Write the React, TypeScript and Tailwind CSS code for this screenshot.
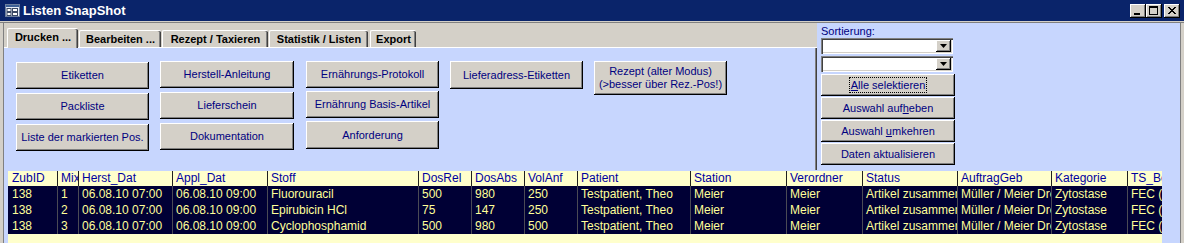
const face = "bg-[#d4d0c8]";
const raised =
  "shadow-[inset_-1px_-1px_0_#000,inset_1px_1px_0_#fff,inset_-2px_-2px_0_#808080]";

const tabs = [
  { label: "Drucken ...", w: "w-[71px]", active: true },
  { label: "Bearbeiten ...", w: "w-[82px]", active: false },
  { label: "Rezept / Taxieren", w: "w-[106px]", active: false },
  { label: "Statistik / Listen", w: "w-[99px]", active: false },
  { label: "Export", w: "w-[46px] ml-[1px]", active: false },
];

const cols = [
  { h: "ZubID", w: "w-[49px]" },
  { h: "Mix", w: "w-[21px]" },
  { h: "Herst_Dat", w: "w-[94px]" },
  { h: "Appl_Dat", w: "w-[95px]" },
  { h: "Stoff", w: "w-[151px]" },
  { h: "DosRel", w: "w-[53px]" },
  { h: "DosAbs", w: "w-[53px]" },
  { h: "VolAnf", w: "w-[53px]" },
  { h: "Patient", w: "w-[113px]" },
  { h: "Station", w: "w-[96px]" },
  { h: "Verordner", w: "w-[76px]" },
  { h: "Status", w: "w-[95px]" },
  { h: "AuftragGeb", w: "w-[94px]" },
  { h: "Kategorie", w: "w-[76px]" },
  { h: "TS_Bearbeitung", w: "w-[60px]" },
];

const rows = [
  ["138", "1", "06.08.10 07:00", "06.08.10 09:00", "Fluorouracil", "500", "980", "250", "Testpatient, Theo", "Meier", "Meier", "Artikel zusammengestellt", "Müller / Meier Dres.", "Zytostase", "FEC (Zyklus 1)"],
  ["138", "2", "06.08.10 07:00", "06.08.10 09:00", "Epirubicin HCl", "75", "147", "250", "Testpatient, Theo", "Meier", "Meier", "Artikel zusammengestellt", "Müller / Meier Dres.", "Zytostase", "FEC (Zyklus 1)"],
  ["138", "3", "06.08.10 07:00", "06.08.10 09:00", "Cyclophosphamid", "500", "980", "500", "Testpatient, Theo", "Meier", "Meier", "Artikel zusammengestellt", "Müller / Meier Dres.", "Zytostase", "FEC (Zyklus 1)"],
];

function FormIcon() {
  return (
    <svg width="15" height="13" viewBox="0 0 15 13" className="shrink-0">
      <rect x="0.5" y="0.5" width="14" height="12" fill="#e8eef8" stroke="#6d7f9f" />
      <rect x="1" y="1" width="13" height="2" fill="#3c5f96" />
      <rect x="2" y="4.5" width="4" height="3" fill="#fff" stroke="#3c4a66" strokeWidth="1" />
      <rect x="7.5" y="4.5" width="5" height="3" fill="#fff" stroke="#3c4a66" strokeWidth="1" />
      <rect x="2" y="8.5" width="4" height="3" fill="#fff" stroke="#3c4a66" strokeWidth="1" />
      <rect x="7.5" y="8.5" width="5" height="3" fill="#fff" stroke="#3c4a66" strokeWidth="1" />
    </svg>
  );
}

function CaptionButton({ kind }: { kind: "min" | "max" | "close" }) {
  return (
    <div className={`w-[16px] h-[14px] ${face} ${raised} flex items-center justify-center`}>
      <svg width="16" height="14" viewBox="0 0 16 14">
        {kind === "min" && <rect x="4" y="9" width="6" height="2" fill="#000" />}
        {kind === "max" && (
          <>
            <rect x="3.5" y="2.5" width="8" height="8" fill="none" stroke="#000" />
            <rect x="3" y="2" width="9" height="2" fill="#000" />
          </>
        )}
        {kind === "close" && (
          <path d="M4 3 L11 10 M5 3 L12 10 M11 3 L4 10 M12 3 L5 10" stroke="#000" strokeWidth="1" />
        )}
      </svg>
    </div>
  );
}

function Btn({ children, className = "" }: { children: React.ReactNode; className?: string }) {
  return (
    <div
      className={`${face} ${raised} flex items-center justify-center text-center text-[11px] leading-[13px] text-[#000080] ${className}`}
    >
      {children}
    </div>
  );
}

function Combo() {
  return (
    <div className="w-[132px] h-[16px] bg-white flex justify-end items-start p-[2px] shadow-[inset_1px_1px_0_#808080,inset_2px_2px_0_#404040,inset_-1px_-1px_0_#fff,inset_-2px_-2px_0_#d4d0c8]">
      <div className={`w-[15px] h-[12px] ${face} ${raised} flex items-center justify-center`}>
        <svg width="7" height="4" viewBox="0 0 7 4">
          <path d="M0 0 H7 L3.5 4 Z" fill="#000" />
        </svg>
      </div>
    </div>
  );
}

export default function App() {
  return (
    <div className="w-[1184px] h-[243px] overflow-hidden bg-[#d4d0c8] font-['Liberation_Sans',Arial,sans-serif] flex flex-col">
      {/* title bar */}
      <div className="h-[21px] shrink-0 bg-[#0a246a] flex items-center pl-[5px] pr-[4px]">
        <FormIcon />
        <span className="ml-[3px] text-white font-bold text-[13px] leading-[15px]">Listen SnapShot</span>
        <div className="ml-auto flex items-center">
          <CaptionButton kind="min" />
          <CaptionButton kind="max" />
          <div className="w-[2px]" />
          <CaptionButton kind="close" />
        </div>
      </div>
      <div className="h-[2px] shrink-0 bg-[#d4d0c8] border-b border-[#808080]" />

      <div className="flex flex-1 min-h-0">
        <div className="w-[4px] shrink-0 bg-[#d4d0c8] border-r border-[#808080]" />

        <div className="w-[1176px] bg-[#c7d6fe] flex flex-col">
          <div className="h-[147px] flex shrink-0">
            {/* tab control */}
            <div className="w-[813px] flex flex-col">
              <div className={`h-[24px] ${face} flex items-end pl-[3px] gap-[1px]`}>
                {tabs.map((t) => (
                  <div
                    key={t.label}
                    className={`${t.w} ${t.active ? "h-[20px] relative z-10 -mb-px pb-[2px]" : "h-[17px]"} ${face} rounded-t-[2px] border-l border-t border-white shadow-[inset_-1px_0_0_#404040,inset_-2px_0_0_#808080] flex items-center justify-center text-[11px] font-bold text-black whitespace-nowrap`}
                  >
                    {t.label}
                  </div>
                ))}
              </div>
              <div className="flex-1 border-t border-white shadow-[inset_-1px_0_0_#404040,inset_-2px_0_0_#808080] pt-[13px] pl-[12px] flex items-start">
                <div className="w-[133px] mt-[1px] flex flex-col gap-[4px]">
                  <Btn className="h-[27px]">Etiketten</Btn>
                  <Btn className="h-[27px]">Packliste</Btn>
                  <Btn className="h-[27px]">Liste der markierten Pos.</Btn>
                </div>
                <div className="w-[134px] ml-[11px] flex flex-col gap-[4px]">
                  <Btn className="h-[27px]">Herstell-Anleitung</Btn>
                  <Btn className="h-[27px]">Lieferschein</Btn>
                  <Btn className="h-[27px]">Dokumentation</Btn>
                </div>
                <div className="w-[133px] ml-[12px] flex flex-col gap-[3px]">
                  <Btn className="h-[27px]">Ernährungs-Protokoll</Btn>
                  <Btn className="h-[27px]">Ernährung Basis-Artikel</Btn>
                  <Btn className="h-[28px]">Anforderung</Btn>
                </div>
                <Btn className="w-[133px] h-[28px] ml-[11px]">Lieferadress-Etiketten</Btn>
                <Btn className="w-[133px] h-[34px] ml-[11px]">
                  Rezept (alter Modus)
                  <br />
                  (&gt;besser über Rez.-Pos!)
                </Btn>
              </div>
            </div>

            {/* sorting / selection */}
            <div className="flex flex-col pl-[4px] pt-[2px]">
              <div className="h-[13px] text-[11px] leading-[13px] text-[#000080]">Sortierung:</div>
              <Combo />
              <div className="h-[2px]" />
              <Combo />
              <div className="mt-[2px] w-[134px] flex flex-col gap-[1px]">
                <Btn className="h-[22px]">
                  <span className="border border-dotted border-black px-[1px] leading-[14px]">
                    <u>A</u>lle selektieren
                  </span>
                </Btn>
                <Btn className="h-[22px]">
                  <span>
                    Auswahl auf<u>h</u>eben
                  </span>
                </Btn>
                <Btn className="h-[22px]">
                  <span>
                    Auswahl <u>u</u>mkehren
                  </span>
                </Btn>
                <Btn className="h-[22px]">Daten aktualisieren</Btn>
              </div>
            </div>
          </div>

          {/* data sheet */}
          <div className="mt-[1px] ml-[4px] w-[1154px] flex-1 overflow-hidden bg-[#ffffcc] flex flex-col text-[12px]">
            <div className="h-[15px] flex shrink-0 text-[#0000a0]">
              {cols.map((c, i) => (
                <div
                  key={c.h}
                  className={`${c.w} shrink-0 overflow-hidden whitespace-nowrap leading-[15px] ${i === 0 ? "pl-[4px]" : "pl-[3px] border-l border-[#202020]"}`}
                >
                  {c.h}
                </div>
              ))}
            </div>
            {rows.map((r, ri) => (
              <div key={ri} className="h-[16px] flex shrink-0 bg-[#000035] text-[#ffff99]">
                {r.map((v, i) => (
                  <div
                    key={i}
                    className={`${cols[i].w} shrink-0 overflow-hidden whitespace-nowrap leading-[16px] ${i === 0 ? "pl-[4px]" : "pl-[3px] border-l border-[#4a4a55]"}`}
                  >
                    {v}
                  </div>
                ))}
              </div>
            ))}
          </div>
        </div>

        <div className="w-[4px] shrink-0 bg-[#d4d0c8] border-l border-[#808080]" />
      </div>
    </div>
  );
}
